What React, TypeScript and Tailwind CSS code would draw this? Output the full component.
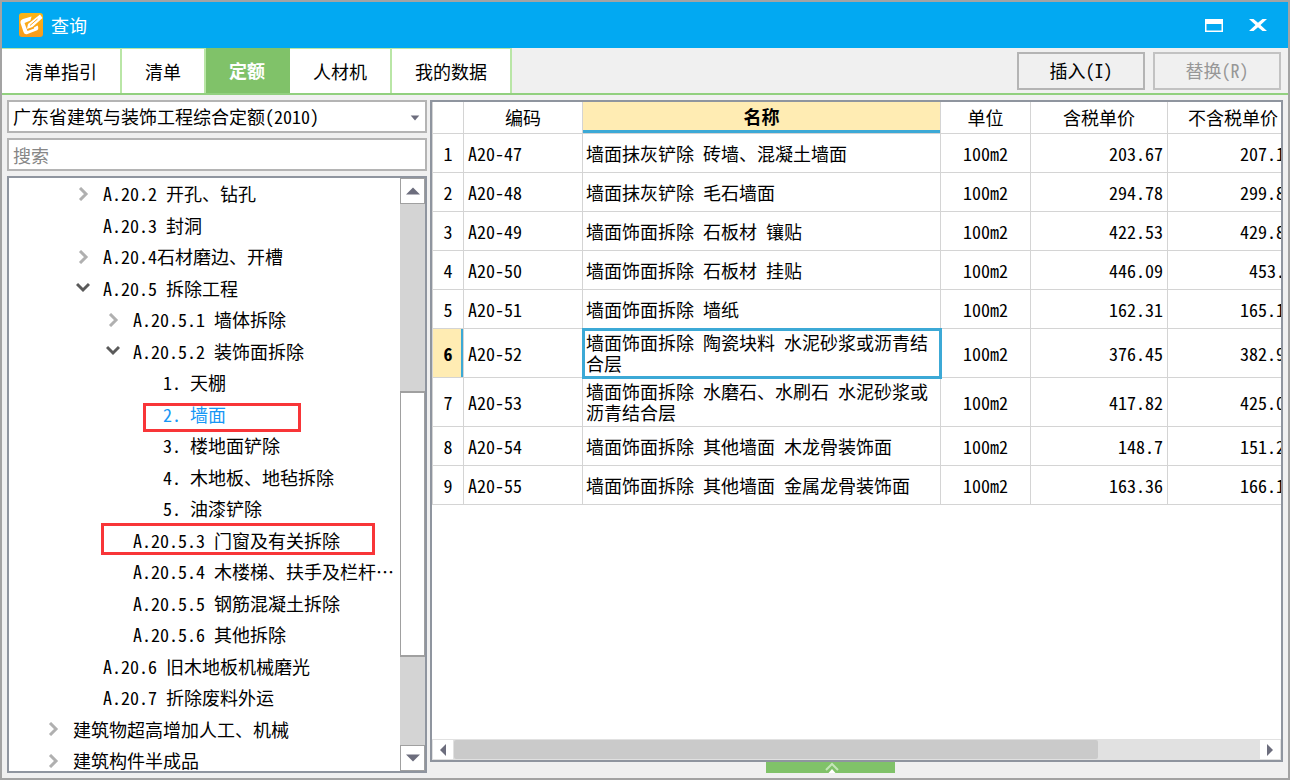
import React from "react";

const tabs = ["清单指引", "清单", "定额", "人材机", "我的数据"];

type Node = {
  label: string;
  indent: string;
  state?: "open" | "closed";
  active?: boolean;
  mark?: string;
};

const L1 = "pl-[64px]";
const L2 = "pl-[94px]";
const L3 = "pl-[124px]";
const L4 = "pl-[154px]";

const tree: Node[] = [
  { label: "A.20.2 开孔、钻孔", indent: L2, state: "closed" },
  { label: "A.20.3 封洞", indent: L2 },
  { label: "A.20.4石材磨边、开槽", indent: L2, state: "closed" },
  { label: "A.20.5 拆除工程", indent: L2, state: "open" },
  { label: "A.20.5.1 墙体拆除", indent: L3, state: "closed" },
  { label: "A.20.5.2 装饰面拆除", indent: L3, state: "open" },
  { label: "1. 天棚", indent: L4 },
  { label: "2. 墙面", indent: L4, active: true, mark: "left-[134px] w-[158px] top-[5px] h-[29px]" },
  { label: "3. 楼地面铲除", indent: L4 },
  { label: "4. 木地板、地毡拆除", indent: L4 },
  { label: "5. 油漆铲除", indent: L4 },
  { label: "A.20.5.3 门窗及有关拆除", indent: L3, mark: "left-[92px] w-[274px] -top-px h-8" },
  { label: "A.20.5.4 木楼梯、扶手及栏杆…", indent: L3 },
  { label: "A.20.5.5 钢筋混凝土拆除", indent: L3 },
  { label: "A.20.5.6 其他拆除", indent: L3 },
  { label: "A.20.6 旧木地板机械磨光", indent: L2 },
  { label: "A.20.7 折除废料外运", indent: L2 },
  { label: "建筑物超高增加人工、机械", indent: L1, state: "closed" },
  { label: "建筑构件半成品", indent: L1, state: "closed" },
];

const rows = [
  ["A20-47", "墙面抹灰铲除 砖墙、混凝土墙面", "203.67", "207.13"],
  ["A20-48", "墙面抹灰铲除 毛石墙面", "294.78", "299.82"],
  ["A20-49", "墙面饰面拆除 石板材 镶贴", "422.53", "429.81"],
  ["A20-50", "墙面饰面拆除 石板材 挂贴", "446.09", "453.7"],
  ["A20-51", "墙面饰面拆除 墙纸", "162.31", "165.12"],
  ["A20-52", "墙面饰面拆除 陶瓷块料 水泥砂浆或沥青结合层", "376.45", "382.91"],
  ["A20-53", "墙面饰面拆除 水磨石、水刷石 水泥砂浆或沥青结合层", "417.82", "425.02"],
  ["A20-54", "墙面饰面拆除 其他墙面 木龙骨装饰面", "148.7", "151.26"],
  ["A20-55", "墙面饰面拆除 其他墙面 金属龙骨装饰面", "163.36", "166.14"],
];

const selected = 5;

function Logo() {
  return (
    <svg viewBox="0 0 24 24" className="w-6 h-6">
      <defs>
        <linearGradient id="logo" x1="0" y1="0" x2="0" y2="1">
          <stop offset="0" stopColor="#fbb514" />
          <stop offset="1" stopColor="#f99a1c" />
        </linearGradient>
      </defs>
      <rect width="24" height="24" rx="3" fill="url(#logo)" />
      <path
        d="M12.500 3.500 4 6Q1 7 1.500 10L4.500 19Q5.500 22 8.500 21L17.500 17.500Q20 16.500 19 13.500L18.500 12.500 15 14.500V15.500L8.500 18 5.500 10 11.500 7.500Z"
        fill="#fff"
      />
      <path d="M21 1.500 23.500 5 13.500 14 8 16 9 11Z" fill="#fff" />
      <path d="M18.500 6 11 12.500" stroke="#f9a51a" strokeWidth="1" />
    </svg>
  );
}

function Chevron({ open }: { open: boolean }) {
  return (
    <svg viewBox="0 0 14 14" className="w-3.5 h-3.5" fill="none" strokeWidth="3">
      {open ? (
        <path d="M1 3 7 9 13 3" stroke="#5a5a5a" />
      ) : (
        <path d="M4 1 10 7 4 13" stroke="#b0b0b0" />
      )}
    </svg>
  );
}

function Triangle({ d, className }: { d: string; className: string }) {
  return (
    <svg viewBox="0 0 14 14" className={className}>
      <path d={d} fill="#6c6d7d" />
    </svg>
  );
}

export default function App() {
  return (
    <div
      lang="zh-CN"
      className="h-screen flex flex-col border-2 border-[#a3a3a3] bg-[#f0f0f0] overflow-hidden text-lg leading-[21px] text-black font-['Noto_Sans_CJK_SC',sans-serif] [font-feature-settings:'hwid']"
    >
      <header className="h-[46px] shrink-0 flex items-center bg-[#02a9f2] text-white pl-[17px] pr-[21px]">
        <Logo />
        <h1 className="ml-2">查询</h1>
        <button aria-label="最大化" className="ml-auto">
          <svg viewBox="0 0 18 13" className="w-[18px] h-[13px]">
            <path d="M0 0H18V13H0ZM1.500 5V11.500H16.500V5Z" fill="#fff" fillRule="evenodd" />
          </svg>
        </button>
        <button aria-label="关闭" className="ml-[26px]">
          <svg viewBox="0 0 18 14" className="w-[18px] h-3.5">
            <path d="M0 1H4.500L9 4.800 13.500 1H18L11.500 7 18 13H13.500L9 9.200 4.500 13H0L6.500 7Z" fill="#fff" />
          </svg>
        </button>
      </header>

      <nav className="h-[47px] shrink-0 flex items-stretch border-b-2 border-[#92d07f] pr-[7px]">
        {tabs.map((t) => (
          <button
            key={t}
            className={
              t === "定额"
                ? "px-[23px] border-r-2 border-[#80c269] bg-[#80c269] text-white font-bold"
                : "px-[23px] border-r-2 border-t border-[#b9e6a6] bg-white"
            }
          >
            {t}
          </button>
        ))}
        <div className="ml-auto flex items-center gap-2">
          <button className="w-32 h-[38px] border-2 border-[#b4b4b4]">插入(I)</button>
          <button disabled className="w-32 h-[38px] border-2 border-[#c2c2c2] text-[#979797]">
            替换(R)
          </button>
        </div>
      </nav>

      <main className="flex-1 min-h-0 flex gap-[3px] p-[5px]">
        <section className="w-[420px] shrink-0 flex flex-col gap-[5px]">
          <div className="relative">
            <select
              aria-label="定额库"
              className="block w-full h-[33px] appearance-none border-2 border-[#b4b4b4] bg-white pl-1 leading-[21px]"
            >
              <option>广东省建筑与装饰工程综合定额(2010)</option>
            </select>
            <Triangle d="M2 4H12L7 10Z" className="absolute right-1.5 top-3 w-3 h-3 pointer-events-none" />
          </div>
          <input
            aria-label="搜索"
            placeholder="搜索"
            className="h-[33px] shrink-0 border-2 border-[#b4b4b4] bg-white pl-1 placeholder:text-[#868686]"
          />
          <div className="flex-1 min-h-0 flex border-2 border-[#8f959f] bg-white">
            <ul className="flex-1 min-w-0 overflow-hidden">
              {tree.map((n) => (
                <li key={n.label} className={"relative flex items-center odd:h-[31px] even:h-8 whitespace-nowrap " + n.indent}>
                  {n.state && (
                    <button aria-label={n.state === "open" ? "折叠" : "展开"} className="-ml-[27px] mr-[13px]">
                      <Chevron open={n.state === "open"} />
                    </button>
                  )}
                  <span className={n.active ? "text-[#1797f5]" : ""}>{n.label}</span>
                  {n.mark && <span className={"absolute border-[3px] border-[#f83538] " + n.mark} />}
                </li>
              ))}
            </ul>
            <div className="w-[25px] shrink-0 flex flex-col bg-[#d4d4d4]">
              <button aria-label="向上" className="h-[26px] flex items-center justify-center border border-[#a0a0a0] bg-white">
                <Triangle d="M0 10.500 7 3.500 14 10.500Z" className="w-3.5 h-3.5" />
              </button>
              <div className="grow-[68] basis-0" />
              <div className="grow-[95] basis-0 border border-b-2 border-t-2 border-[#a0a0a0] bg-white" />
              <div className="grow-[32] basis-0" />
              <button aria-label="向下" className="h-[26px] flex items-center justify-center border border-[#a0a0a0] bg-white">
                <Triangle d="M0 3.500 7 10.500 14 3.500Z" className="w-3.5 h-3.5" />
              </button>
            </div>
          </div>
        </section>

        <section className="flex-1 min-w-0 flex flex-col">
          <div className="flex-1 min-h-0 flex flex-col border-2 border-[#8f959f] bg-white">
            <div className="flex-1 min-h-0 overflow-hidden">
              <table className="w-[867px] table-fixed border-collapse">
                <colgroup>
                  <col className="w-[31px]" />
                  <col className="w-[119px]" />
                  <col />
                  <col className="w-[90px]" />
                  <col className="w-[137px]" />
                  <col className="w-[131px]" />
                </colgroup>
                <thead>
                  <tr className="h-[31px] *:border *:border-t-0 *:border-[#d4d4d4] *:font-normal *:p-0">
                    <th />
                    <th>编码</th>
                    <th className="bg-[#ffecb3]">
                      <div className="h-[31px] flex items-center justify-center border-b-3 border-[#3ca9d6] font-bold">名称</div>
                    </th>
                    <th>单位</th>
                    <th>含税单价</th>
                    <th>不含税单价</th>
                  </tr>
                </thead>
                <tbody>
                  {rows.map(([code, name, price, net], i) => (
                    <tr key={code} className="h-[39px] *:border *:border-[#d4d4d4]">
                      <td
                        className={
                          i === selected
                            ? "text-center font-bold bg-[#ffecb3] shadow-[inset_-2px_0_0_#3ca9d6]"
                            : "text-center"
                        }
                      >
                        {i + 1}
                      </td>
                      <td className="pl-1">{code}</td>
                      <td
                        className={
                          i === selected
                            ? "pl-[3px] pr-2 py-[3px] outline-3 -outline-offset-2 outline-[#3ca9d6]"
                            : "pl-[3px] pr-2 py-[3px]"
                        }
                      >
                        {name}
                      </td>
                      <td className="text-center">100m2</td>
                      <td className="text-right pr-1">{price}</td>
                      <td className="text-right pr-1">{net}</td>
                    </tr>
                  ))}
                </tbody>
              </table>
            </div>
            <div className="h-[21px] shrink-0 flex gap-px border border-[#e1e1e1] bg-[#e1e1e1]">
              <button aria-label="向左" className="w-5 flex items-center justify-center bg-white">
                <Triangle d="M10 1 4 7 10 13Z" className="w-3.5 h-3.5" />
              </button>
              <div className="grow-[646] basis-0 rounded-xs bg-[#cacaca]" />
              <div className="grow-[160] basis-0" />
              <button aria-label="向右" className="w-5 flex items-center justify-center bg-white">
                <Triangle d="M4 1 10 7 4 13Z" className="w-3.5 h-3.5" />
              </button>
            </div>
          </div>
          <button aria-label="展开面板" className="ml-[336px] w-[129px] h-[11px] pl-[3px] flex justify-center bg-[#80c269]">
            <svg viewBox="0 0 14 11" className="w-3.5 h-[11px]">
              <path d="M1 8 7 2 13 8" fill="none" stroke="#c4e6b8" strokeWidth="2" />
              <path d="M3.500 11 7 7 10.500 11Z" fill="#fff" />
            </svg>
          </button>
        </section>
      </main>
    </div>
  );
}
